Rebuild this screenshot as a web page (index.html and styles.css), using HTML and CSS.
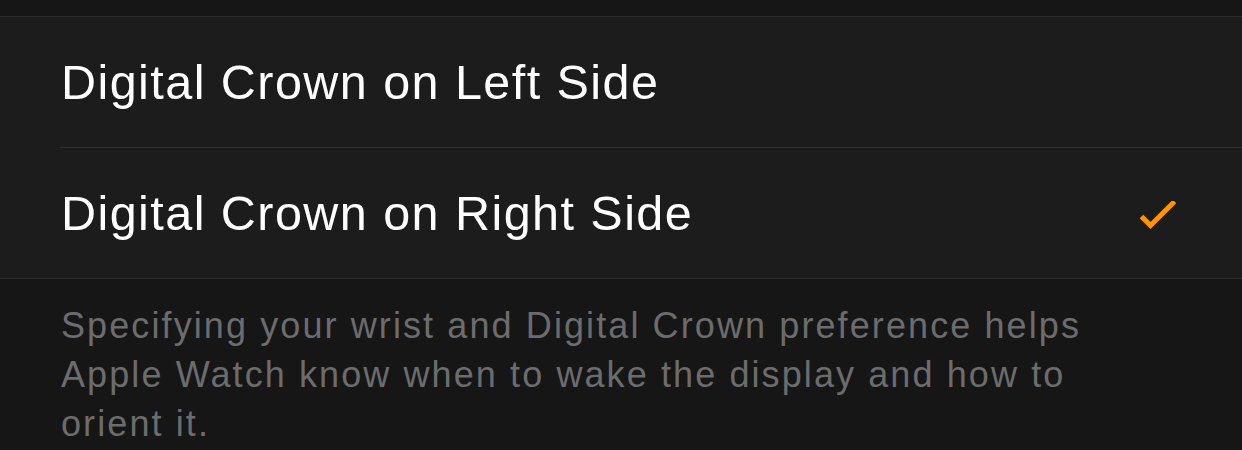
FILE: index.html
```html
<!DOCTYPE html>
<html>
<head>
<meta charset="utf-8">
<link rel="stylesheet" href="styles.css">
</head>
<body>
<div class="screen">
  <div class="top-gap"></div>
  <div class="group">
    <div class="row">
      <div class="row-inner">
        <span class="label">Digital Crown on Left Side</span>
      </div>
    </div>
    <div class="row">
      <div class="row-inner last">
        <span class="label">Digital Crown on Right Side</span>
        <svg class="check" width="40" height="32" viewBox="0 0 40 32">
          <path d="M3.5 15.5 L12.5 24.5 L36.5 0.5" fill="none" stroke="#ff9500" stroke-width="5" stroke-linecap="butt" stroke-linejoin="miter"/>
        </svg>
      </div>
    </div>
  </div>
  <p class="footer">Specifying your wrist and Digital Crown preference helps Apple Watch know when to wake the display and how to orient it.</p>
</div>
</body>
</html>
```

FILE: styles.css
```css
html, body {
  margin: 0;
  padding: 0;
  background: #161616;
}
.screen {
  width: 1242px;
  height: 450px;
  overflow: hidden;
  background: #161616;
  font-family: "Helvetica Neue", "Liberation Sans", Arial, sans-serif;
}
.top-gap {
  height: 16px;
}
.group {
  background: #1c1c1c;
  border-top: 1px solid #2e2e2e;
  border-bottom: 1px solid #2e2e2e;
}
.row {
  padding-left: 60px;
}
.row-inner {
  height: 130px;
  display: flex;
  align-items: center;
  justify-content: space-between;
  padding-right: 64px;
  border-bottom: 1px solid #2e2e2e;
}
.row-inner.last {
  border-bottom: none;
}
.label {
  color: #ffffff;
  font-size: 48.5px;
  letter-spacing: 1.45px;
  margin-left: 1px;
}
.check {
  display: block;
  margin-top: 8px;
}
.footer {
  margin: 0;
  padding: 22px 60px 0 61px;
  color: #6c6c6e;
  font-size: 36px;
  line-height: 49px;
  letter-spacing: 2.1px;
  width: 1040px;
}
```
